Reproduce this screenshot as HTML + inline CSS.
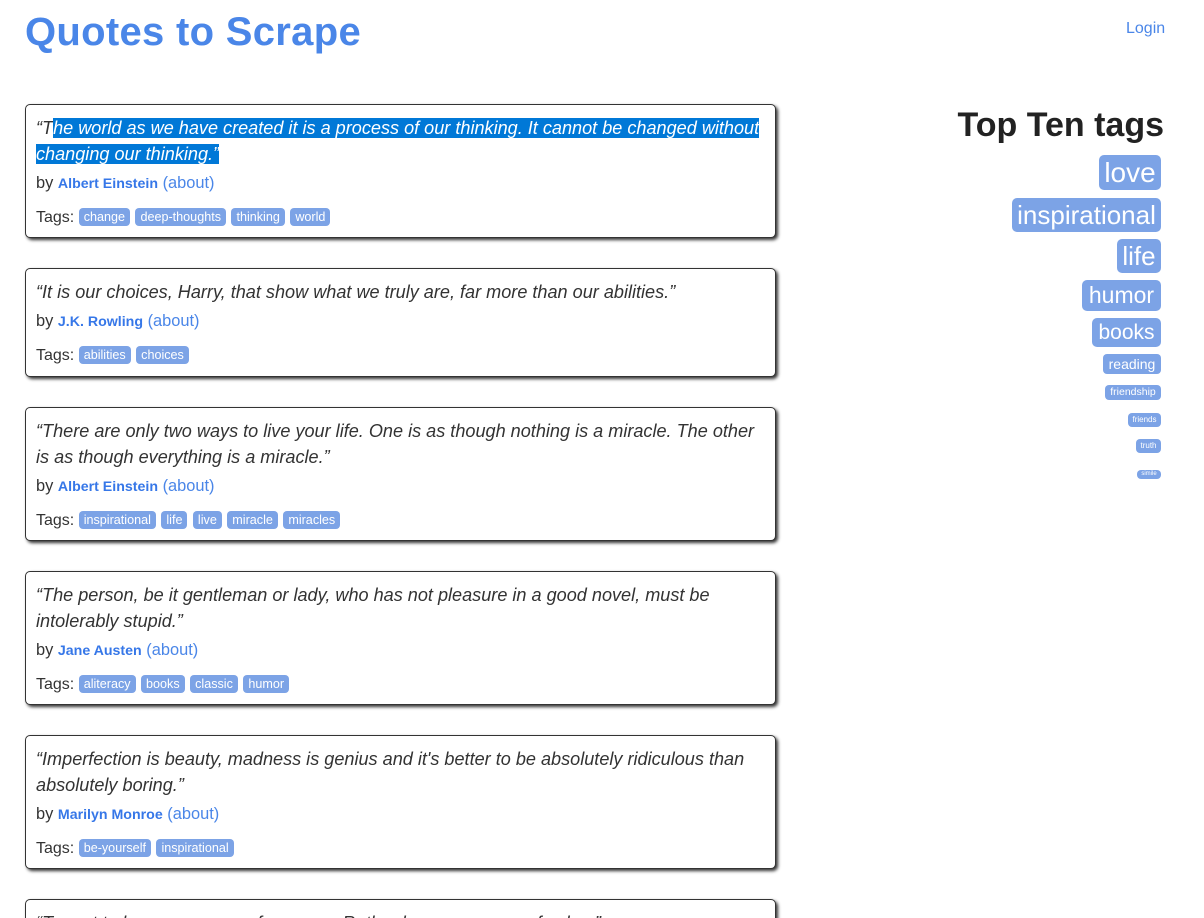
<!DOCTYPE html>
<html><head><meta charset="utf-8"><style>
*{box-sizing:border-box;margin:0;padding:0}
html,body{width:1204px;height:918px;overflow:hidden}
body{background:#fff;font-family:"Liberation Sans",sans-serif;color:#333;position:relative}
h1{position:absolute;left:25px;top:10px;font-size:40px;font-weight:bold;color:#4a86e8;letter-spacing:0.3px}
.login{position:absolute;left:1126px;top:20px;font-size:16px;color:#4a86e8}
.q{position:absolute;left:25px;width:751px;border:1px solid #333;border-radius:5px;box-shadow:2px 2px 3px #333;padding:10px 10px 0 10px;background:#fff}
.t{font-style:italic;font-size:18.1px;line-height:26px;color:#333;letter-spacing:0}
.by{font-size:16.4px;line-height:20px;margin-top:6px}
.by b{color:#3677e8;font-size:14.2px}
.by a{color:#4a86e8}
.tags{font-size:16px;margin-top:14px;height:20px;line-height:20px}
.tg{display:inline-block;background:#7ca3e6;color:#fff;font-size:12.6px;line-height:18px;height:18px;padding:0 5px;border-radius:4px;margin-right:1px;vertical-align:1px}
.sel{background:#0078d7;color:#fff}
h2{position:absolute;right:40px;top:106px;font-size:34px;font-weight:bold;color:#222}
.s{position:absolute;right:43px;background:#7ca3e6;color:#fff;border-radius:5px;text-align:center}
</style></head><body>
<h1>Quotes to Scrape</h1>
<div class="login">Login</div>

<div class="q" style="top:104px;height:134px"><div class="t">“T<span class="sel">he world as we have created it is a process of our thinking. It cannot be changed without changing our thinking.”</span></div>
<div class="by">by <b>Albert Einstein</b> <a>(about)</a></div>
<div class="tags">Tags: <span class="tg">change</span> <span class="tg">deep-thoughts</span> <span class="tg">thinking</span> <span class="tg">world</span></div></div>

<div class="q" style="top:268px;height:109px"><div class="t">“It is our choices, Harry, that show what we truly are, far more than our abilities.”</div>
<div class="by">by <b>J.K. Rowling</b> <a>(about)</a></div>
<div class="tags">Tags: <span class="tg">abilities</span> <span class="tg">choices</span></div></div>

<div class="q" style="top:407px;height:134px"><div class="t">“There are only two ways to live your life. One is as though nothing is a miracle. The other<br>is as though everything is a miracle.”</div>
<div class="by">by <b>Albert Einstein</b> <a>(about)</a></div>
<div class="tags">Tags: <span class="tg">inspirational</span> <span class="tg">life</span> <span class="tg">live</span> <span class="tg">miracle</span> <span class="tg">miracles</span></div></div>

<div class="q" style="top:571px;height:134px"><div class="t">“The person, be it gentleman or lady, who has not pleasure in a good novel, must be<br>intolerably stupid.”</div>
<div class="by">by <b>Jane Austen</b> <a>(about)</a></div>
<div class="tags">Tags: <span class="tg">aliteracy</span> <span class="tg">books</span> <span class="tg">classic</span> <span class="tg">humor</span></div></div>

<div class="q" style="top:735px;height:134px"><div class="t">“Imperfection is beauty, madness is genius and it's better to be absolutely ridiculous than<br>absolutely boring.”</div>
<div class="by">by <b>Marilyn Monroe</b> <a>(about)</a></div>
<div class="tags">Tags: <span class="tg">be-yourself</span> <span class="tg">inspirational</span></div></div>

<div class="q" style="top:899px;height:60px"><div class="t">“Try not to become a man of success. Rather become a man of value.”</div></div>

<h2>Top Ten tags</h2>
<div class="s" style="top:155px;width:62px;height:35px;font-size:28px;line-height:35px">love</div>
<div class="s" style="top:198px;width:149px;height:34px;font-size:26px;line-height:34px">inspirational</div>
<div class="s" style="top:239px;width:44px;height:34px;font-size:26px;line-height:34px">life</div>
<div class="s" style="top:280px;width:79px;height:31px;font-size:23px;line-height:31px">humor</div>
<div class="s" style="top:318px;width:69px;height:29px;font-size:21px;line-height:29px">books</div>
<div class="s" style="top:354px;width:58px;height:20px;font-size:14px;line-height:20px;border-radius:4px">reading</div>
<div class="s" style="top:385px;width:56px;height:15px;font-size:10.5px;line-height:15px;border-radius:4px">friendship</div>
<div class="s" style="top:413px;width:33px;height:14px;font-size:8px;line-height:14px;border-radius:4px">friends</div>
<div class="s" style="top:439px;width:25px;height:14px;font-size:8px;line-height:14px;border-radius:4px">truth</div>
<div class="s" style="top:470px;width:24px;height:9px;font-size:6px;line-height:9px;border-radius:4px">simile</div>
</body></html>
